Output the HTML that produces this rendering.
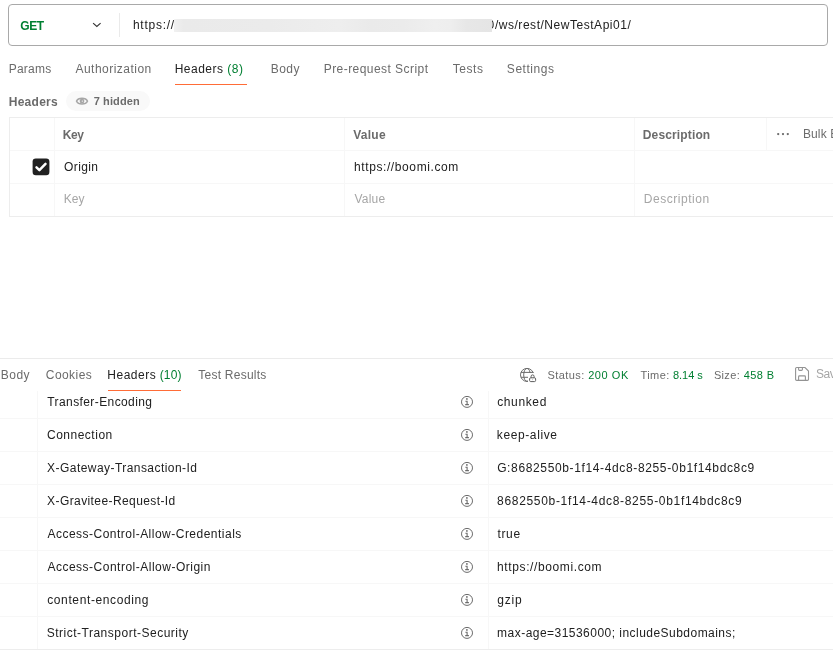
<!DOCTYPE html>
<html>
<head>
<meta charset="utf-8">
<title>Postman</title>
<style>
*{box-sizing:border-box;margin:0;padding:0}
html,body{width:833px;height:662px;overflow:hidden;background:#fff}
body{font-family:"Liberation Sans",sans-serif;font-size:12px;color:#212121;position:relative}
.abs{position:absolute;white-space:nowrap}
.t{position:absolute;white-space:nowrap;line-height:14px;height:14px}
.g{color:#6b6b6b}
.gr{color:#007f31}
.ph{color:#a6a6a6}
.b{font-weight:bold}
.hl{position:absolute;height:1px;background:#f7f7f7}
.vl{position:absolute;width:1px;background:#f7f7f7}
</style>
</head>
<body>
<div id="root" style="position:absolute;left:0;top:0;width:833px;height:662px;will-change:transform">

<!-- URL bar -->
<div class="abs" style="left:8px;top:4px;width:820px;height:42px;border:1px solid #a9a9a9;border-radius:4px"></div>
<svg class="abs" style="left:92px;top:21px" width="11" height="8" viewBox="0 0 11 8"><path d="M1.1 2.1 L4.85 5.4 L8.6 2.1" fill="none" stroke="#333" stroke-width="1.15"/></svg>
<div class="vl" style="left:119px;top:13px;height:24px;background:#eaeaea"></div>
<div class="abs" style="left:174px;top:19px;width:318px;height:12.5px;z-index:3;background:linear-gradient(90deg,#f1f1f1 0%,#eaeaea 3%,#ebebeb 30%,#eeeeee 52%,#eaeaea 62%,#ebebeb 72%,#efefef 82%,#eeeeee 87%,#e7e7e7 92%,#e5e5e5 100%)"></div>

<!-- Request tabs -->
<div class="abs" style="left:175px;top:84px;width:72px;height:1px;background:#ff6c37"></div>

<!-- Headers label -->
<div class="abs" style="left:66px;top:91px;width:84px;height:20px;border-radius:10px;background:#f9f9f9"></div>
<svg class="abs" style="left:75px;top:96px" width="14" height="10" viewBox="0 0 14 10"><path d="M1.5 5.1 C3.3 1.2 10.7 1.2 12.5 5.1 C10.7 9 3.3 9 1.5 5.1 Z" fill="none" stroke="#a6a6a6" stroke-width="1.4"/><circle cx="7" cy="5.1" r="2.4" fill="#a6a6a6"/><circle cx="7.3" cy="5.1" r="0.6" fill="#fff"/></svg>

<!-- Request headers table -->
<div class="hl" style="left:9px;top:117px;width:824px;background:#ededed;z-index:2"></div>
<div class="hl" style="left:9px;top:150px;width:824px"></div>
<div class="hl" style="left:9px;top:183px;width:824px"></div>
<div class="hl" style="left:9px;top:216px;width:824px;background:#ededed;z-index:2"></div>
<div class="vl" style="left:9px;top:117px;height:100px;background:#ededed;z-index:2"></div>
<div class="vl" style="left:54px;top:117px;height:100px"></div>
<div class="vl" style="left:344px;top:117px;height:100px"></div>
<div class="vl" style="left:634px;top:117px;height:100px"></div>
<div class="vl" style="left:766px;top:117px;height:34px"></div>

<svg class="abs" style="left:776px;top:132px" width="14" height="4" viewBox="0 0 14 4"><circle cx="2.2" cy="2.1" r="1.15" fill="#6b6b6b"/><circle cx="7" cy="2.1" r="1.15" fill="#6b6b6b"/><circle cx="11.8" cy="2.1" r="1.15" fill="#6b6b6b"/></svg>

<svg class="abs" style="left:32px;top:158px" width="18" height="18" viewBox="0 0 18 18"><rect x="0.6" y="0.4" width="16.8" height="16.8" rx="3.2" fill="#212121"/><path d="M4.5 9.3 L7.4 12.1 L13.5 5.8" fill="none" stroke="#fff" stroke-width="2.5" stroke-linecap="round" stroke-linejoin="round"/></svg>


<!-- Response area -->
<div class="hl" style="left:0;top:358px;width:833px;background:#ebebeb"></div>
<div class="abs" style="left:108px;top:390px;width:73px;height:1px;background:#ff6c37"></div>

<!-- status -->
<svg class="abs" style="left:519px;top:366px" width="18" height="18" viewBox="0 0 18 18" fill="none" stroke="#6b6b6b" stroke-width="1">
<defs><clipPath id="gc"><path d="M0 0 H18 V7.1 H9 V18 H0 Z"/></clipPath></defs>
<g clip-path="url(#gc)"><circle cx="8" cy="8.9" r="6.5"/><ellipse cx="8" cy="8.9" rx="3.3" ry="6.5"/><path d="M2 6.4 H14.5 M2 11.3 H9"/></g>
<rect x="10.6" y="11.8" width="6" height="3.8" rx="1.1" stroke="#5c5c5c" stroke-width="1"/>
<path d="M12.1 11.8 V10.4 a1.5 1.5 0 0 1 3 0 V11.8" stroke="#5c5c5c" stroke-width="1"/>
<circle cx="13.6" cy="13.7" r="0.45" fill="#8a8a8a" stroke="none"/>
</svg>
<svg class="abs" style="left:794px;top:366px" width="16" height="16" viewBox="0 0 16 16" fill="none" stroke="#939393" stroke-width="1.1"><path d="M1.6 2.6 a1.1 1.1 0 0 1 1.1 -1.1 H11 L14.5 5 V13.3 a1.1 1.1 0 0 1 -1.1 1.1 H2.7 a1.1 1.1 0 0 1 -1.1 -1.1 Z"/><path d="M4.6 1.5 V3.5 a0.9 0.9 0 0 0 0.9 0.9 H7.5 a0.9 0.9 0 0 0 0.9 -0.9 V1.5"/><path d="M4.6 14.4 V10.8 a0.9 0.9 0 0 1 0.9 -0.9 H10.5 a0.9 0.9 0 0 1 0.9 0.9 V14.4"/></svg>

<!-- Response table -->
<div class="vl" style="left:37px;top:391px;height:259px"></div>
<div class="vl" style="left:488px;top:391px;height:259px"></div>
<div class="hl" style="left:0;top:418px;width:833px"></div>
<div class="hl" style="left:0;top:451px;width:833px"></div>
<div class="hl" style="left:0;top:484px;width:833px"></div>
<div class="hl" style="left:0;top:517px;width:833px"></div>
<div class="hl" style="left:0;top:550px;width:833px"></div>
<div class="hl" style="left:0;top:583px;width:833px"></div>
<div class="hl" style="left:0;top:616px;width:833px"></div>
<div class="hl" style="left:0;top:649px;width:833px;background:#ededed;z-index:2"></div>



<!-- info icons -->
<svg class="abs" style="left:460px;top:395px" width="14" height="14" viewBox="0 0 14 14" fill="none" stroke="#6b6b6b"><circle cx="7" cy="6.9" r="5.5" stroke-width="1"/><path d="M5.4 6.2 H7.1 V9.4 M5.2 9.6 H8.9" stroke-width="1.1"/><circle cx="6.9" cy="3.9" r="0.9" fill="#6b6b6b" stroke="none"/></svg>
<svg class="abs" style="left:460px;top:428px" width="14" height="14" viewBox="0 0 14 14" fill="none" stroke="#6b6b6b"><circle cx="7" cy="6.9" r="5.5" stroke-width="1"/><path d="M5.4 6.2 H7.1 V9.4 M5.2 9.6 H8.9" stroke-width="1.1"/><circle cx="6.9" cy="3.9" r="0.9" fill="#6b6b6b" stroke="none"/></svg>
<svg class="abs" style="left:460px;top:461px" width="14" height="14" viewBox="0 0 14 14" fill="none" stroke="#6b6b6b"><circle cx="7" cy="6.9" r="5.5" stroke-width="1"/><path d="M5.4 6.2 H7.1 V9.4 M5.2 9.6 H8.9" stroke-width="1.1"/><circle cx="6.9" cy="3.9" r="0.9" fill="#6b6b6b" stroke="none"/></svg>
<svg class="abs" style="left:460px;top:494px" width="14" height="14" viewBox="0 0 14 14" fill="none" stroke="#6b6b6b"><circle cx="7" cy="6.9" r="5.5" stroke-width="1"/><path d="M5.4 6.2 H7.1 V9.4 M5.2 9.6 H8.9" stroke-width="1.1"/><circle cx="6.9" cy="3.9" r="0.9" fill="#6b6b6b" stroke="none"/></svg>
<svg class="abs" style="left:460px;top:527px" width="14" height="14" viewBox="0 0 14 14" fill="none" stroke="#6b6b6b"><circle cx="7" cy="6.9" r="5.5" stroke-width="1"/><path d="M5.4 6.2 H7.1 V9.4 M5.2 9.6 H8.9" stroke-width="1.1"/><circle cx="6.9" cy="3.9" r="0.9" fill="#6b6b6b" stroke="none"/></svg>
<svg class="abs" style="left:460px;top:560px" width="14" height="14" viewBox="0 0 14 14" fill="none" stroke="#6b6b6b"><circle cx="7" cy="6.9" r="5.5" stroke-width="1"/><path d="M5.4 6.2 H7.1 V9.4 M5.2 9.6 H8.9" stroke-width="1.1"/><circle cx="6.9" cy="3.9" r="0.9" fill="#6b6b6b" stroke="none"/></svg>
<svg class="abs" style="left:460px;top:593px" width="14" height="14" viewBox="0 0 14 14" fill="none" stroke="#6b6b6b"><circle cx="7" cy="6.9" r="5.5" stroke-width="1"/><path d="M5.4 6.2 H7.1 V9.4 M5.2 9.6 H8.9" stroke-width="1.1"/><circle cx="6.9" cy="3.9" r="0.9" fill="#6b6b6b" stroke="none"/></svg>
<svg class="abs" style="left:460px;top:626px" width="14" height="14" viewBox="0 0 14 14" fill="none" stroke="#6b6b6b"><circle cx="7" cy="6.9" r="5.5" stroke-width="1"/><path d="M5.4 6.2 H7.1 V9.4 M5.2 9.6 H8.9" stroke-width="1.1"/><circle cx="6.9" cy="3.9" r="0.9" fill="#6b6b6b" stroke="none"/></svg>
<div id="u_get" class="t b" style="left:20.16px;top:19.00px;letter-spacing:-0.365px;color:#007f31">GET</div>
<div id="u_https" class="t" style="left:132.95px;top:17.90px;letter-spacing:0.744px">https://</div>
<div id="u_zero" class="t" style="left:487.56px;top:17.90px">0</div>
<div id="u_path" class="t" style="left:494.92px;top:17.90px;letter-spacing:0.532px">/ws/rest/NewTestApi01/</div>
<div id="rt_params" class="t g" style="left:8.71px;top:62.00px;letter-spacing:0.242px">Params</div>
<div id="rt_auth" class="t g" style="left:75.46px;top:62.00px;letter-spacing:0.476px">Authorization</div>
<div id="rt_headers" class="t" style="left:174.72px;top:62.00px;letter-spacing:0.471px">Headers</div>
<div id="rt_hcount" class="t gr" style="left:227.27px;top:62.00px;letter-spacing:0.490px">(8)</div>
<div id="rt_body" class="t g" style="left:270.72px;top:62.00px;letter-spacing:0.483px">Body</div>
<div id="rt_pre" class="t g" style="left:323.72px;top:62.00px;letter-spacing:0.444px">Pre-request Script</div>
<div id="rt_tests" class="t g" style="left:452.83px;top:62.00px;letter-spacing:0.536px">Tests</div>
<div id="rt_settings" class="t g" style="left:506.85px;top:62.00px;letter-spacing:0.540px">Settings</div>
<div id="lbl_headers" class="t g b" style="left:8.79px;top:95.10px;letter-spacing:0.251px">Headers</div>
<div id="lbl_hidden" class="t g b" style="left:93.70px;top:94.00px;letter-spacing:0.120px;font-size:11px">7 hidden</div>
<div id="th_key" class="t g b" style="left:62.80px;top:128.00px;letter-spacing:-0.495px">Key</div>
<div id="th_value" class="t g b" style="left:353.17px;top:128.00px;letter-spacing:0.265px">Value</div>
<div id="th_desc" class="t g b" style="left:642.80px;top:128.00px;letter-spacing:0.139px">Description</div>
<div id="th_bulk" class="t g" style="left:802.93px;top:127.40px;letter-spacing:0.120px">Bulk Edit</div>
<div id="r_origin" class="t" style="left:64.11px;top:160.00px;letter-spacing:0.360px">Origin</div>
<div id="r_boomi" class="t" style="left:353.99px;top:160.00px;letter-spacing:0.601px">https://boomi.com</div>
<div id="p_key" class="t ph" style="left:63.71px;top:192.00px;letter-spacing:0.023px">Key</div>
<div id="p_value" class="t ph" style="left:354.41px;top:192.00px;letter-spacing:0.243px">Value</div>
<div id="p_desc" class="t ph" style="left:643.72px;top:192.00px;letter-spacing:0.548px">Description</div>
<div id="st_body" class="t g" style="left:0.80px;top:368.00px;letter-spacing:0.485px">Body</div>
<div id="st_cookies" class="t g" style="left:45.81px;top:368.00px;letter-spacing:0.432px">Cookies</div>
<div id="st_headers" class="t" style="left:107.35px;top:368.00px;letter-spacing:0.503px">Headers</div>
<div id="st_hcount" class="t gr" style="left:159.67px;top:368.00px;letter-spacing:0.168px">(10)</div>
<div id="st_test" class="t g" style="left:198.33px;top:368.00px;letter-spacing:0.240px">Test Results</div>
<div id="s_status" class="t g" style="left:547.43px;top:368.00px;letter-spacing:0.445px;font-size:11px">Status:</div>
<div id="s_200" class="t gr" style="left:588.18px;top:368.00px;letter-spacing:0.550px;font-size:11px">200 OK</div>
<div id="s_time" class="t g" style="left:640.57px;top:368.00px;letter-spacing:0.389px;font-size:11px">Time:</div>
<div id="s_814" class="t gr" style="left:673.01px;top:368.00px;letter-spacing:-0.050px;font-size:11px">8.14 s</div>
<div id="s_size" class="t g" style="left:713.93px;top:368.00px;letter-spacing:0.334px;font-size:11px">Size:</div>
<div id="s_458" class="t gr" style="left:743.79px;top:368.00px;letter-spacing:0.388px;font-size:11px">458 B</div>
<div id="s_save" class="t ph" style="left:816.02px;top:367.40px;letter-spacing:-0.500px">Save</div>
<div id="k0" class="t" style="left:47.30px;top:395.00px;letter-spacing:0.403px">Transfer-Encoding</div>
<div id="k1" class="t" style="left:47.00px;top:428.00px;letter-spacing:0.502px">Connection</div>
<div id="k2" class="t" style="left:47.12px;top:461.00px;letter-spacing:0.445px">X-Gateway-Transaction-Id</div>
<div id="k3" class="t" style="left:47.12px;top:494.00px;letter-spacing:0.405px">X-Gravitee-Request-Id</div>
<div id="k4" class="t" style="left:47.46px;top:527.00px;letter-spacing:0.488px">Access-Control-Allow-Credentials</div>
<div id="k5" class="t" style="left:47.46px;top:560.00px;letter-spacing:0.496px">Access-Control-Allow-Origin</div>
<div id="k6" class="t" style="left:47.23px;top:593.00px;letter-spacing:0.615px">content-encoding</div>
<div id="k7" class="t" style="left:46.76px;top:626.00px;letter-spacing:0.499px">Strict-Transport-Security</div>
<div id="v0" class="t" style="left:497.19px;top:395.00px;letter-spacing:0.627px">chunked</div>
<div id="v1" class="t" style="left:496.83px;top:428.00px;letter-spacing:0.602px">keep-alive</div>
<div id="v2" class="t" style="left:497.15px;top:461.00px;letter-spacing:0.637px">G:8682550b-1f14-4dc8-8255-0b1f14bdc8c9</div>
<div id="v3" class="t" style="left:497.12px;top:494.00px;letter-spacing:0.678px">8682550b-1f14-4dc8-8255-0b1f14bdc8c9</div>
<div id="v4" class="t" style="left:497.40px;top:527.00px;letter-spacing:0.690px">true</div>
<div id="v5" class="t" style="left:497.08px;top:560.00px;letter-spacing:0.612px">https://boomi.com</div>
<div id="v6" class="t" style="left:497.28px;top:593.00px;letter-spacing:0.780px">gzip</div>
<div id="v7" class="t" style="left:497.11px;top:626.00px;letter-spacing:0.468px">max-age=31536000; includeSubdomains;</div>
</div>
</body>
</html>
